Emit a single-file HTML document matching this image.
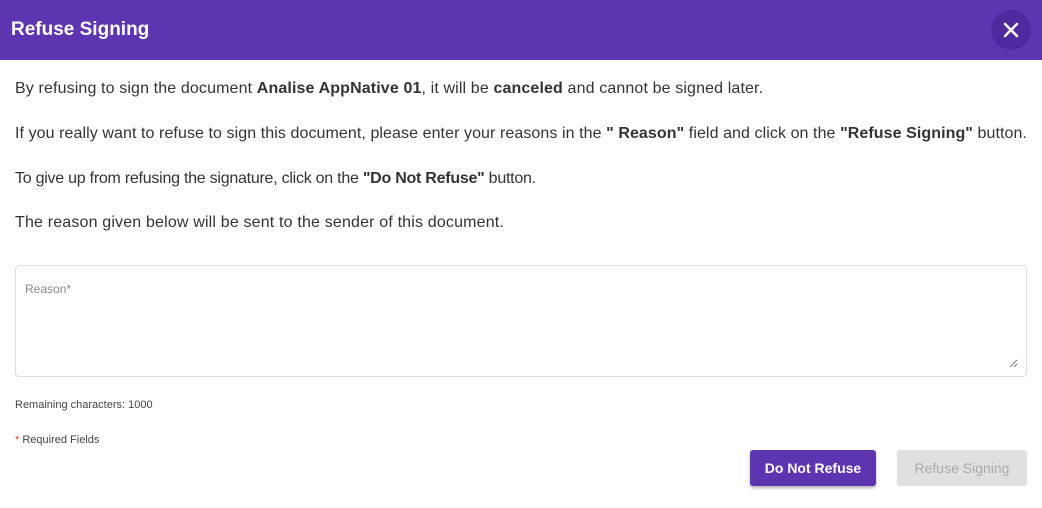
<!DOCTYPE html>
<html><head><style>
body{margin:0;width:1042px;height:508px;background:#fff;font-family:"Liberation Sans",sans-serif;color:#333;position:relative;overflow:hidden}
.hd{position:absolute;left:0;top:0;width:1042px;height:60px;background:#5e35b1}
.hd h1{position:absolute;left:11px;top:19px;margin:0;font-size:19px;font-weight:bold;color:#fff}
.x{position:absolute;left:991px;top:10px;width:40px;height:40px;border-radius:50%;background:#4f2a9f}
p{position:absolute;left:15px;margin:0;font-size:16px;white-space:nowrap;letter-spacing:0.08px}
.ta{position:absolute;left:15px;top:265px;width:1010px;height:110px;border:1px solid #ddd;border-radius:4px}
.ta span{position:absolute;left:9px;top:16px;font-size:12px;color:#888}
.small{position:absolute;left:15px;font-size:11px;color:#444}
.b1{position:absolute;left:750px;top:450px;width:126px;height:36px;background:#5e35b1;border-radius:3px;color:#fff;font-weight:bold;font-size:14px;text-align:center;line-height:36px;box-shadow:0 2px 3px rgba(0,0,0,.3)}
.b2{position:absolute;left:897px;top:450px;width:130px;height:36px;background:#e0e0e0;border-radius:3px;color:#aaa;font-size:14px;text-align:center;line-height:36px}
</style></head><body>
<div class="hd"><h1>Refuse Signing</h1><div class="x"><svg width="40" height="40"><path d="M14 14L26 26M26 14L14 26" stroke="#fff" stroke-width="2.5" stroke-linecap="round"/></svg></div></div>
<p style="top:80px;letter-spacing:0.13px">By refusing to sign the document <b>Analise AppNative 01</b>, it will be <b>canceled</b> and cannot be signed later.</p>
<p style="top:125px;letter-spacing:0.08px">If you really want to refuse to sign this document, please enter your reasons in the <b>" Reason"</b> field and click on the <b>"Refuse Signing"</b> button.</p>
<p style="top:170px;letter-spacing:-0.25px">To give up from refusing the signature, click on the <b>"Do Not Refuse"</b> button.</p>
<p style="top:214px;letter-spacing:0.17px">The reason given below will be sent to the sender of this document.</p>
<div class="ta"><span>Reason*</span><svg style="position:absolute;right:8px;bottom:8px" width="9" height="9"><path d="M1 8L8 1M5 8L8 5" stroke="#777" stroke-width="1"/></svg></div>
<div class="small" style="top:399px">Remaining characters: 1000</div>
<div class="small" style="top:434px"><span style="color:#e53935">*</span> Required Fields</div>
<div class="b1">Do Not Refuse</div>
<div class="b2">Refuse Signing</div>
</body></html>
